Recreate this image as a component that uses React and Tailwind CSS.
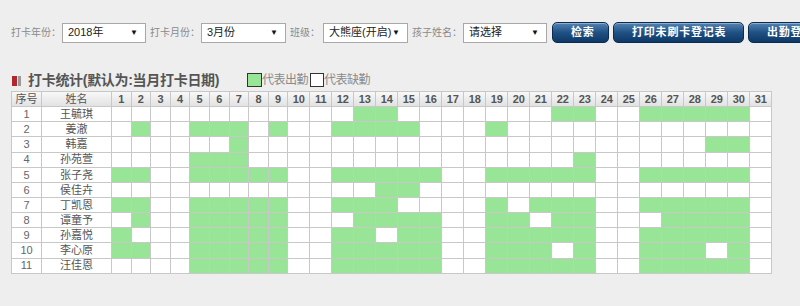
const students = [
  ['王毓琪', [13, 14, 22, 23, 26, 27, 28, 29, 30]],
  ['姜澈', [2, 5, 6, 7, 9, 12, 13, 14, 15, 19]],
  ['韩嘉', [7, 29, 30]],
  ['孙苑萱', [5, 6, 7, 23]],
  ['张子尧', [1, 2, 5, 6, 7, 8, 9, 12, 13, 14, 15, 16, 19, 20, 21, 22, 23, 26, 27, 28, 29, 30]],
  ['侯佳卉', [14, 15]],
  ['丁凯恩', [1, 2, 5, 6, 7, 8, 9, 12, 13, 14, 19, 21, 22, 23, 26, 27, 28, 29, 30]],
  ['谭童予', [2, 5, 6, 7, 8, 9, 13, 14, 15, 16, 19, 20, 22, 23, 27, 28, 29, 30]],
  ['孙嘉悦', [1, 5, 6, 7, 8, 9, 12, 13, 15, 16, 19, 20, 21, 22, 23, 26, 27, 28, 29, 30]],
  ['李心原', [1, 2, 5, 6, 7, 8, 9, 12, 13, 14, 15, 16, 19, 20, 21, 23, 26, 27, 28, 30]],
  ['汪佳恩', [5, 6, 7, 8, 9, 12, 13, 14, 15, 16, 19, 20, 21, 22, 23, 26, 27, 28, 29, 30]],
]

const days = Array.from({ length: 31 }, (_, i) => i + 1)

function FakeSelect({ value, width }) {
  return (
    <div className={`${width} h-[20px] shrink-0 flex items-center justify-between bg-white border border-[#a8a8a8] pl-[5px] pr-[7px] text-[11px] text-[#222]`}>
      <span>{value}</span>
      <span className="text-[8px] text-[#111]">▼</span>
    </div>
  )
}

function Label({ text, width }) {
  return <span className={`${width} shrink-0 text-[10px] text-[#8a8a8a]`}>{text}</span>
}

function NavyButton({ children, width }) {
  return (
    <button className={`${width} h-[21px] shrink-0 rounded-[5px] border border-[#0b2c52] bg-linear-to-b from-[#5584b2] via-[#1f5184] to-[#0e3866] text-white text-[11px] font-bold tracking-[0.8px] text-left pl-[18px] shadow-[inset_0_1px_0_rgba(255,255,255,0.35)]`}>
      {children}
    </button>
  )
}

export default function App() {
  const cell = 'h-[15.15px] border-r border-b border-[#c8c8c8] flex items-center justify-center'

  return (
    <div className="w-[800px] h-[306px] overflow-hidden bg-[#eeeeee] font-['Liberation_Sans','Noto_Sans_CJK_SC',sans-serif]">
      {/* filter bar */}
      <div className="pt-[22px] pl-[11px] flex items-center whitespace-nowrap">
        <Label text="打卡年份：" width="w-[51px]" />
        <FakeSelect value="2018年" width="w-[84px]" />
        <span className="w-[4px] shrink-0" />
        <Label text="打卡月份：" width="w-[51px]" />
        <FakeSelect value="3月份" width="w-[85px]" />
        <span className="w-[4px] shrink-0" />
        <Label text="班级：" width="w-[33px]" />
        <FakeSelect value="大熊座(开启)" width="w-[85px]" />
        <span className="w-[4px] shrink-0" />
        <Label text="孩子姓名：" width="w-[51px]" />
        <FakeSelect value="请选择" width="w-[84px]" />
        <div className="ml-[5px] flex gap-[4px]">
          <NavyButton width="w-[57px]">检索</NavyButton>
          <NavyButton width="w-[131px]">打印未刷卡登记表</NavyButton>
          <NavyButton width="w-[110px]">出勤登记表</NavyButton>
        </div>
      </div>

      {/* title + legend */}
      <div className="mt-[26px] h-[22px] pl-[12px] flex items-center">
        <span className="w-[5px] h-[10px] bg-[#b3262c] mt-[2px]" />
        <span className="w-[3px] h-[10px] bg-[#9a9a9a] ml-[1px] mt-[2px]" />
        <span className="ml-[7px] w-[219px] text-[14px] font-bold text-[#555] tracking-[-0.3px]">打卡统计(默认为:当月打卡日期)</span>
        <span className="w-[15px] h-[14px] bg-[#98e598] border border-[#333]" />
        <span className="text-[12px] text-[#8a8a8a] tracking-[-0.5px]">代表出勤</span>
        <span className="ml-[2px] w-[14px] h-[14px] bg-white border border-[#333]" />
        <span className="text-[12px] text-[#8a8a8a] tracking-[-0.5px]">代表缺勤</span>
      </div>

      {/* attendance grid */}
      <div className="pl-[11px]">
        <div className="grid grid-cols-[30px_70px_repeat(9,19.6px)_repeat(22,22px)] w-max border-l border-t border-[#c8c8c8] bg-white text-[#555]">
          <div className={`${cell} bg-linear-to-b from-[#f8f8f8] to-[#e2e2e2] text-[11px]`}>序号</div>
          <div className={`${cell} bg-linear-to-b from-[#f8f8f8] to-[#e2e2e2] text-[11px]`}>姓名</div>
          {days.map((d) => (
            <div key={d} className={`${cell} bg-linear-to-b from-[#f8f8f8] to-[#e2e2e2] text-[11px] font-bold`}>{d}</div>
          ))}

          {students.map(([name, present], idx) => (
            <div key={name} className="contents">
              <div className={`${cell} text-[11px] text-[#666]`}>{idx + 1}</div>
              <div className={`${cell} text-[11px]`}>{name}</div>
              {days.map((d) => (
                <div key={d} className={`${cell} ${present.includes(d) ? 'bg-[#98e598]' : 'bg-white'}`} />
              ))}
            </div>
          ))}
        </div>
      </div>
    </div>
  )
}
